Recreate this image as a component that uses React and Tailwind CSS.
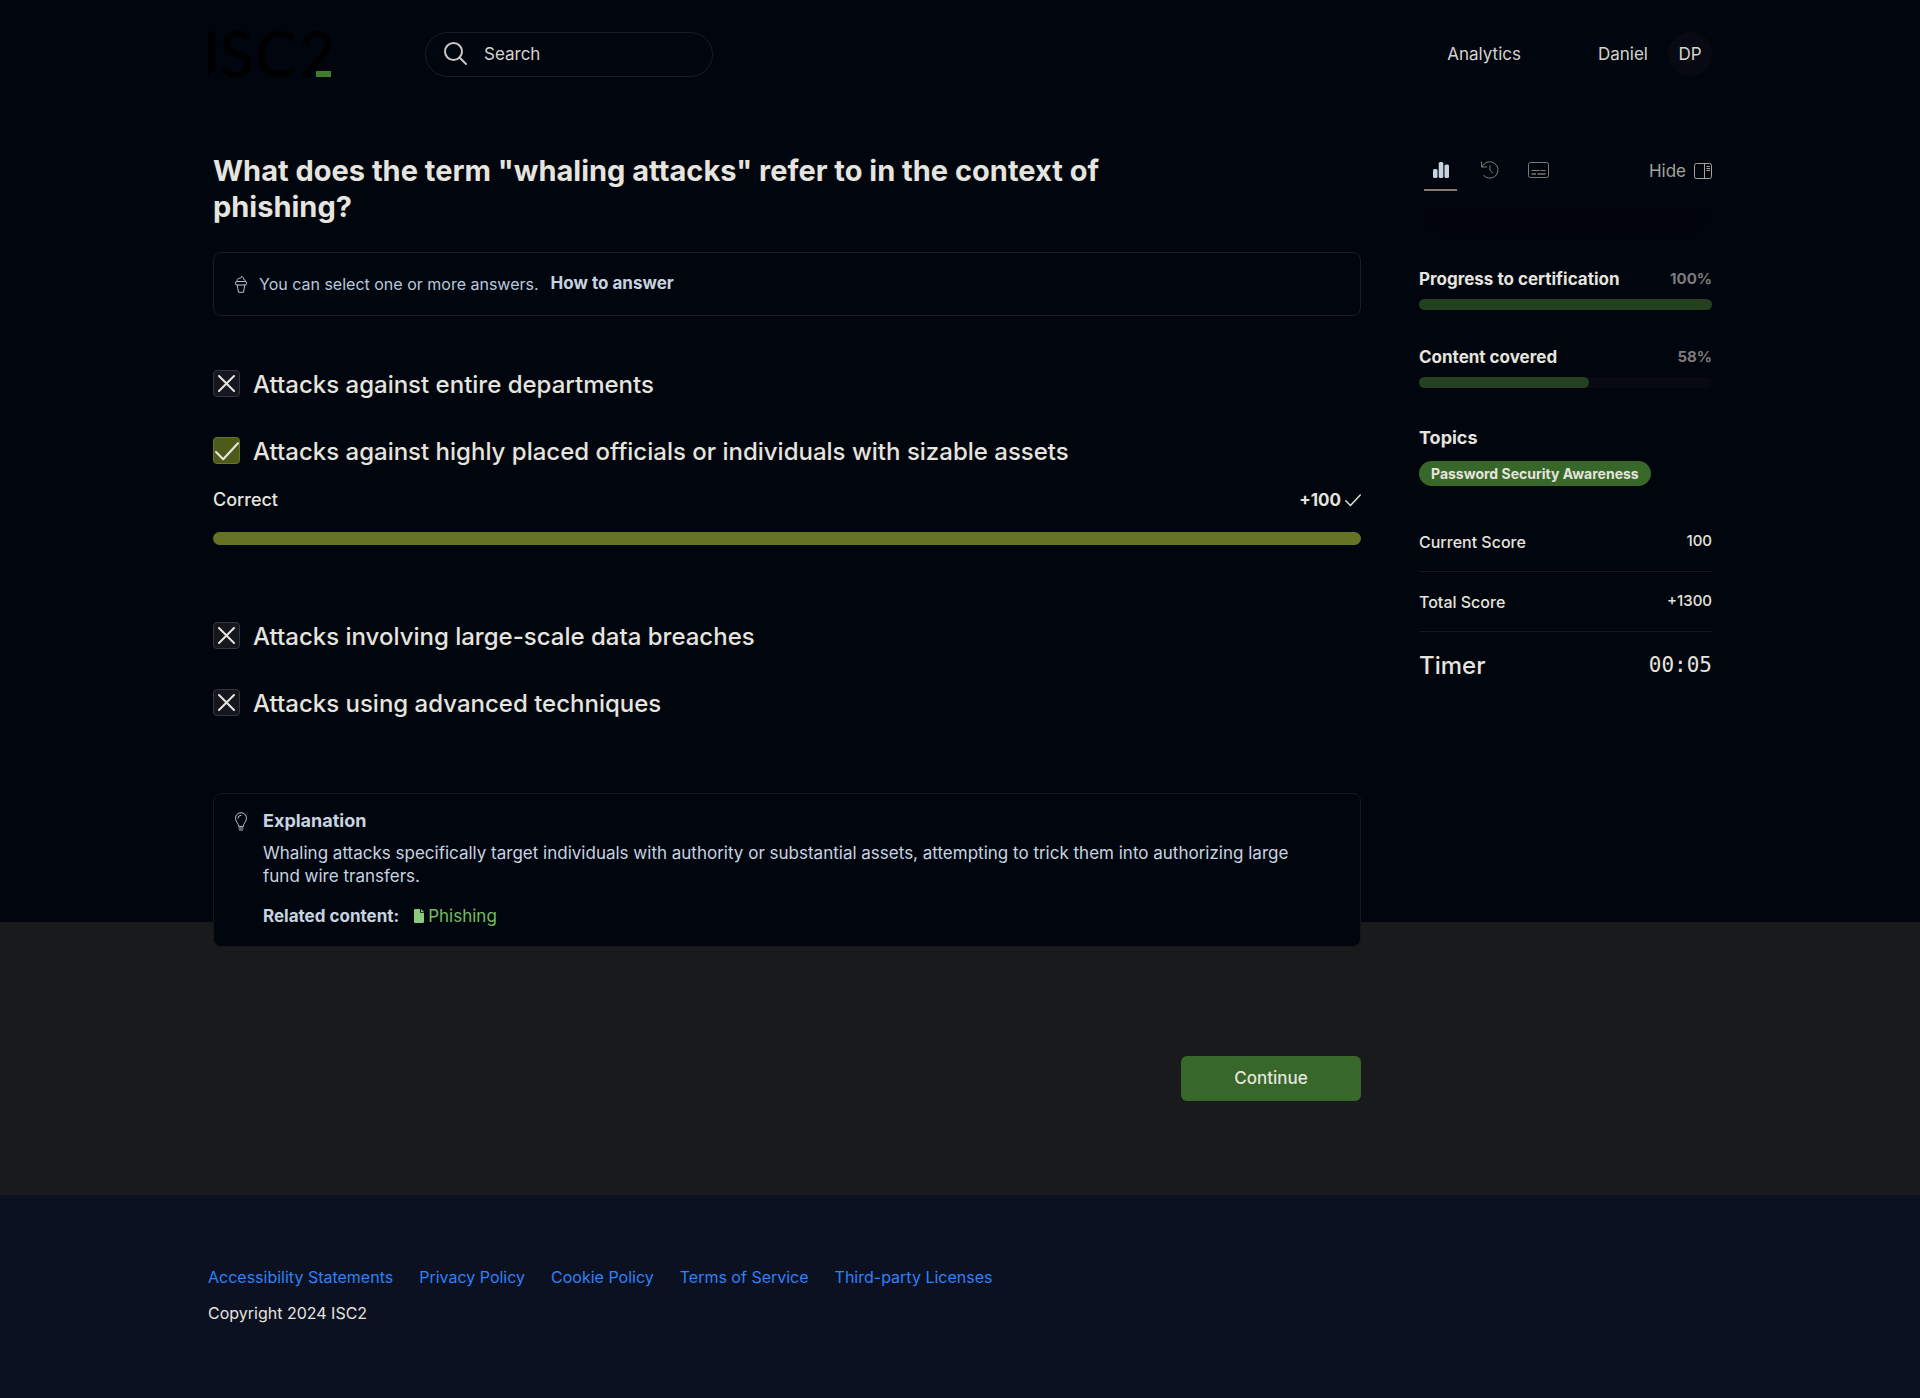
import { useState } from 'react'

const NAV_TEXT = 'text-[17px] leading-6 font-normal text-[#d6d3cd]'

const answers = [
  { id: 'a1', label: 'Attacks against entire departments', correct: false },
  {
    id: 'a2',
    label: 'Attacks against highly placed officials or individuals with sizable assets',
    correct: true,
    points: 100,
  },
  { id: 'a3', label: 'Attacks involving large-scale data breaches', correct: false },
  { id: 'a4', label: 'Attacks using advanced techniques', correct: false },
]

const progress = [
  { label: 'Progress to certification', value: 100 },
  { label: 'Content covered', value: 58 },
]

const scores = [
  { label: 'Current Score', value: '100' },
  { label: 'Total Score', value: '+1300' },
]

const footerLinks = [
  'Accessibility Statements',
  'Privacy Policy',
  'Cookie Policy',
  'Terms of Service',
  'Third-party Licenses',
]

function Logo() {
  return (
    <svg className="-ml-1.5" width="132" height="80" viewBox="-6 -16 132 80" role="img" aria-label="ISC2">
      <text
        x="-5 12 47 91"
        y="47"
        fontSize="62"
        fill="#000000"
        stroke="#000000"
        style={{ fontFamily: 'Lato, sans-serif' }}
      >
        ISC2
      </text>
      <path d="M103 40h23v10h-23z" fill="#01060e" />
      <path d="M0 48v-1l7-7v8z" fill="#01060e" />
      <path d="M108 41h15v6h-15z" fill="#3f7d2c" />
    </svg>
  )
}

function SearchIcon() {
  return (
    <svg className="shrink-0" width="24" height="24" viewBox="1 1 24 24" fill="none" stroke="#cbc7c1" strokeWidth="2">
      <circle cx="10.5" cy="10.5" r="8.5" />
      <path d="M16.5 16.500l6.500 6.500" strokeLinecap="round" />
    </svg>
  )
}

function BarsIcon() {
  return (
    <svg width="18" height="18" viewBox="0 0 18 18" fill="#c8d3e0">
      <rect x="1" y="8" width="4.5" height="9" rx="1.5" />
      <rect x="6.7" y="1" width="4.6" height="16" rx="1.5" />
      <rect x="12.5" y="3.5" width="4.5" height="13.5" rx="1.5" />
    </svg>
  )
}

function HistoryIcon() {
  return (
    <svg width="18" height="18" viewBox="0 0 18 18" fill="none" stroke="#7d7b77" strokeLinecap="round" strokeLinejoin="round">
      <path d="M.6 1v5h5" />
      <path d="M1 5.8A8.3 8.3 0 1 1 2.6 14.6" />
      <path d="M9 4.8V9l2.8 3" />
    </svg>
  )
}

function CaptionIcon() {
  return (
    <svg width="22" height="16" viewBox="0 0 22 16" fill="none" stroke="#7d7b77">
      <rect x=".5" y=".5" width="20" height="15" rx="2" />
      <path d="M3.500 8.500h8M12.500 8.500h5" />
      <path d="M3.500 12h4.500M9.500 12h8" strokeWidth="2" stroke="#5a5957" />
    </svg>
  )
}

function PanelIcon() {
  return (
    <svg width="18" height="16" viewBox="0 0 18 16" fill="none" stroke="#a5a29d">
      <rect x=".5" y=".5" width="17" height="15" rx="2" />
      <path d="M10.500 .5v15" />
      <path d="M12.500 3.500h3.500M12.500 5.500h3.500M12.500 7.500h3.500" />
    </svg>
  )
}

function IceCreamIcon() {
  return (
    <svg className="shrink-0" width="12" height="17" viewBox="0 0 12 17" fill="none" stroke="#b9c2cd" strokeLinejoin="round" strokeLinecap="round">
      <path d="M2.2 5.500c-.8-1.600.3-3.200 2-3.200 1.500 0 2.300-.5 2-1.700 2 .2 2.800 1.500 2.300 2.700 1.500 0 2 1.200 1.500 2.300" />
      <path d="M2 5.500h8a1.500 1.500 0 0 1 0 3.500H2a1.500 1.500 0 0 1 0-3.500z" />
      <path d="M2.200 9l1.300 7.300h5L9.800 9" />
    </svg>
  )
}

function BulbIcon() {
  return (
    <svg className="shrink-0" width="12" height="19" viewBox="0 0 12 19" fill="none" stroke="#b9c2cd" strokeLinejoin="round" strokeLinecap="round">
      <path d="M3.700 14c0-2.500-3.200-4.300-3.200-7.800a5.500 5.500 0 0 1 11 0c0 3.500-3.200 5.300-3.200 7.800z" />
      <path d="M3 6.200a3 3 0 0 1 3-3" />
      <path d="M3.800 16h4.400M4.300 18h3.400" />
    </svg>
  )
}

function FileIcon() {
  return (
    <svg width="10" height="14" viewBox="0 0 10 14" fill="#8cc97d">
      <path d="M1.200 0H6v3.800h4v9a1.200 1.200 0 0 1-1.200 1.200H1.200A1.200 1.200 0 0 1 0 12.800V1.200A1.200 1.200 0 0 1 1.200 0z" />
      <path d="M7 0l3 3H7z" />
    </svg>
  )
}

function CheckIcon({ size = 16 }) {
  return (
    <svg width={size} height={size} viewBox="0 0 22 22" fill="none" stroke="#e6e4df" strokeWidth="2" strokeLinecap="round" strokeLinejoin="round">
      <path d="M1 12l6.500 6.500L21 4" />
    </svg>
  )
}

function CrossIcon() {
  return (
    <svg width="17" height="17" viewBox="0 0 17 17" fill="none" stroke="#e6e4df" strokeWidth="2" strokeLinecap="round">
      <path d="M1 1l15 15M16 1L1 16" />
    </svg>
  )
}

function Answer({ answer }) {
  return (
    <li>
      <div className="flex items-start gap-[13px]">
        <span className="grid place-items-center">
          <input
            id={answer.id}
            type="checkbox"
            defaultChecked={answer.correct}
            className={`col-start-1 row-start-1 size-[27px] appearance-none rounded border ${
              answer.correct ? 'border-[#667623] bg-[#4c5a1c]' : 'border-[#35353a] bg-[#15171e]'
            }`}
          />
          <span className="pointer-events-none col-start-1 row-start-1">
            {answer.correct ? <CheckIcon size={24} /> : <CrossIcon />}
          </span>
        </span>
        <label htmlFor={answer.id} className="text-2xl leading-[30px] font-medium">
          {answer.label}
        </label>
      </div>
      {answer.correct && (
        <div className="mt-[19px] pb-10">
          <div className="flex items-center justify-between leading-7">
            <span className="text-lg leading-7 font-medium">Correct</span>
            <span className="flex items-center gap-1 text-[17px] font-bold">
              +{answer.points}
              <CheckIcon />
            </span>
          </div>
          <div className="mt-[18px] h-[13px] rounded-full bg-[#647424]" />
        </div>
      )}
    </li>
  )
}

function Header() {
  return (
    <header className="border-b border-[#04080f]">
      <div className="mx-auto flex h-[108px] max-w-[1504px] items-center">
        <a href="#home" aria-label="Home">
          <Logo />
        </a>
        <label className="ml-[91px] flex h-[45px] w-72 items-center gap-4 rounded-full border border-[#1b1c20] pl-[18px]">
          <SearchIcon />
          <input
            type="search"
            aria-label="Search"
            placeholder="Search"
            className={`${NAV_TEXT} w-full bg-transparent outline-none placeholder:text-[#d6d3cd]`}
          />
        </label>
        <nav className="ml-auto flex items-center">
          <a href="#analytics" className={NAV_TEXT}>Analytics</a>
          <a href="#account" className={`${NAV_TEXT} ml-[77px] flex items-center gap-5`}>
            Daniel
            <span className="flex size-11 items-center justify-center rounded-full bg-[#070a12]">DP</span>
          </a>
        </nav>
      </div>
    </header>
  )
}

function Sidebar() {
  const [tab, setTab] = useState('stats')
  const tabs = [
    { id: 'stats', label: 'Statistics', icon: <BarsIcon /> },
    { id: 'history', label: 'History', icon: <HistoryIcon /> },
    { id: 'captions', label: 'Captions', icon: <CaptionIcon /> },
  ]

  return (
    <aside className="w-[293px] shrink-0">
      <div className="flex items-center justify-between">
        <div className="flex gap-4 pl-[5px]">
          {tabs.map((t) => (
            <button
              key={t.id}
              type="button"
              aria-label={t.label}
              onClick={() => setTab(t.id)}
              className={`flex h-10 w-[33px] items-center justify-center border-b-2 ${
                tab === t.id ? 'border-[#85796b]' : 'border-transparent'
              }`}
            >
              {t.icon}
            </button>
          ))}
        </div>
        <button type="button" className="flex items-center gap-2 text-[17px] leading-6 text-[#a5a29d]">
          Hide
          <PanelIcon />
        </button>
      </div>
      <div className="mx-1 mt-[18px] h-7 rounded-b-[28px] bg-[#01040c]" />

      <div className="mt-[30px] flex flex-col gap-[35px]">
        {progress.map((item) => (
          <div key={item.label}>
            <div className="flex items-center justify-between leading-6 font-bold">
              <span className="text-[17px]">{item.label}</span>
              <span className="text-[15px] text-[#7d7c7b]">{item.value}%</span>
            </div>
            <div className="mt-2 h-[11px] rounded-full bg-[#070a12]">
              <div className="h-full rounded-full bg-[#24411f]" style={{ width: `${item.value}%` }} />
            </div>
          </div>
        ))}
      </div>

      <h2 className="mt-[38px] text-lg leading-6 font-bold">Topics</h2>
      <span className="mt-[11px] inline-flex h-[25px] items-center rounded-full bg-[#376829] px-3 text-sm font-bold">
        Password Security Awareness
      </span>

      <dl className="mt-[26px]">
        {scores.map((s) => (
          <div key={s.label} className="flex h-[60px] items-center justify-between border-b border-[#14171e] font-medium">
            <dt className="text-base">{s.label}</dt>
            <dd className="text-[15px]">{s.value}</dd>
          </div>
        ))}
        <div className="flex h-[68px] items-center justify-between">
          <dt className="text-2xl font-medium">Timer</dt>
          <dd className="font-['DejaVu_Sans_Mono',monospace] text-[21px]">00:05</dd>
        </div>
      </dl>
    </aside>
  )
}

export default function App() {
  return (
    <div className="flex min-h-screen flex-col bg-[#191a1b] font-['Inter',sans-serif] text-[#e6e4df]">
      <div className="bg-[#01060e]">
        <Header />
        <div className="mx-auto flex max-w-[1504px] gap-[58px] pl-[5px]">
          <main className="min-w-0 flex-1 pt-11">
            <h1 className="max-w-[960px] text-[29px] leading-9 font-bold">
              What does the term "whaling attacks" refer to in the context of phishing?
            </h1>

            <div className="mt-[27px] flex h-16 items-center rounded-lg border border-[#1b1c20] px-[21px] text-base text-[#b9c8dc]">
              <IceCreamIcon />
              <p className="ml-3">You can select one or more answers.</p>
              <a href="#how-to-answer" className="ml-3 text-[17px] font-bold text-[#c8d3e0]">How to answer</a>
            </div>

            <ul className="mt-[54px] flex flex-col gap-[37px]">
              {answers.map((answer) => (
                <Answer key={answer.id} answer={answer} />
              ))}
            </ul>

            <section className="relative mt-[74px] -mb-[25px] flex gap-4 rounded-lg border border-[#14171d] bg-[#01060e] pt-[15px] pr-14 pb-[18px] pl-[21px] text-[#c8d3e0]">
              <div className="pt-[3px]">
                <BulbIcon />
              </div>
              <div>
                <h2 className="text-lg leading-6 font-bold">Explanation</h2>
                <p className="mt-[9px] text-[17px] leading-[23px]">
                  Whaling attacks specifically target individuals with authority or substantial assets, attempting to
                  trick them into authorizing large fund wire transfers.
                </p>
                <p className="mt-4 flex items-center text-[17px] leading-6">
                  <span className="font-bold">Related content:</span>
                  <a href="#phishing" className="ml-[15px] flex items-center gap-1 text-[#6fbf5e]">
                    <FileIcon />
                    Phishing
                  </a>
                </p>
              </div>
            </section>
          </main>
          <div className="pt-[42px]">
            <Sidebar />
          </div>
        </div>
      </div>

      <div className="mx-auto flex w-full max-w-[1504px] justify-end pt-[134px] pr-[351px] pb-[94px]">
        <button type="button" className="h-[45px] w-[180px] rounded-md bg-[#376829] text-[17px] font-medium">
          Continue
        </button>
      </div>

      <footer className="flex-1 bg-[#0b1120] pt-[70px] pb-[72px]">
        <div className="mx-auto max-w-[1504px] text-base leading-6">
          <nav className="flex gap-[26px]">
            {footerLinks.map((link) => (
              <a key={link} href="#footer" className="text-[#2f81f7]">{link}</a>
            ))}
          </nav>
          <p className="mt-3">Copyright 2024 ISC2</p>
        </div>
      </footer>
    </div>
  )
}
